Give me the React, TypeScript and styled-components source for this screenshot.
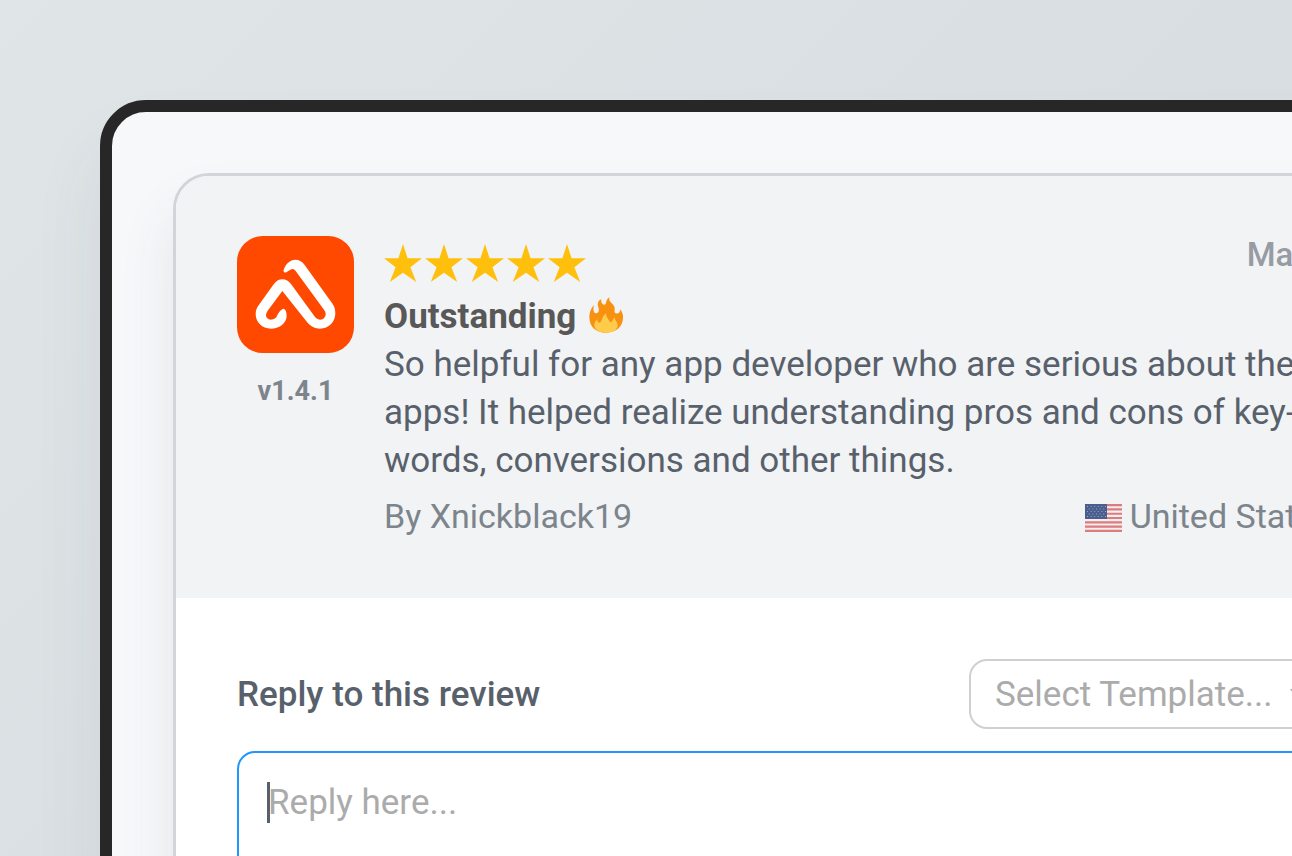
import React from "react";
import styled, { createGlobalStyle } from "styled-components";

const GlobalStyle = createGlobalStyle`
  *, *::before, *::after { box-sizing: border-box; }
  html, body { margin: 0; overflow: hidden; }
  body {
    font-family: Roboto, "Liberation Sans", sans-serif;
    color: #58616b;
    -webkit-font-smoothing: antialiased;
  }
  h2, p { margin: 0; }
`;

const Page = styled.main`
  display: flex;
  height: 100vh;
  padding: 100px 0 0 100px;
  overflow: hidden;
  background: linear-gradient(135deg, #e0e5e8 0%, #d9dee2 60%, #d5dade 100%);
`;

const Frame = styled.div`
  flex: 1;
  margin: 0 -177px -160px 0;
  padding: 61px;
  border: 12px solid #272727;
  border-radius: 46px;
  background: #f7f8fa;
  box-shadow: 0 48px 72px rgba(60, 80, 90, 0.08);
`;

const Card = styled.article`
  border: 3px solid #d2d4da;
  border-radius: 36px;
  overflow: hidden;
  background: #ffffff;
  box-shadow: 0 36px 56px rgba(60, 66, 80, 0.1);
`;

const Review = styled.section`
  display: flex;
  gap: 30px;
  padding: 60px 61px 58px;
  background: #f2f3f5;
`;

const AppInfo = styled.div`
  display: flex;
  flex-direction: column;
  align-items: center;
  gap: 22px;
  width: 117px;
  flex: none;
`;

const AppIcon = styled.svg`
  width: 117px;
  height: 117px;
`;

const Version = styled.span`
  font-size: 27px;
  line-height: 32px;
  font-weight: 700;
  color: #7c848c;
`;

const Body = styled.div`
  flex: 1;
  min-width: 0;
`;

const Row = styled.div`
  display: flex;
  justify-content: space-between;
  align-items: center;
`;

const RatingRow = styled(Row)`
  align-items: flex-start;
  height: 57px;
`;

const Stars = styled.div`
  display: flex;
  gap: 3px;
  padding-top: 8px;
`;

const Star = styled.svg`
  width: 38px;
  height: 38px;
  fill: #ffc00d;
`;

const DateText = styled.time`
  font-size: 33px;
  line-height: 38px;
  font-weight: 500;
  color: #979ba3;
  white-space: nowrap;
`;

const Title = styled.h2`
  display: flex;
  align-items: center;
  gap: 12px;
  font-size: 35px;
  line-height: 48px;
  font-weight: 700;
  color: #585858;
`;

const Flame = styled.svg`
  width: 36px;
  height: 36px;
  margin-bottom: 4px;
`;

const Text = styled.p`
  font-size: 35px;
  line-height: 48px;
  white-space: nowrap;
`;

const MetaRow = styled(Row)`
  padding-top: 7px;
  font-size: 34px;
  line-height: 48px;
  color: #7c848c;
  white-space: nowrap;
`;

const Country = styled.span`
  display: flex;
  align-items: center;
  gap: 8px;
`;

const Flag = styled.svg`
  width: 37px;
  height: 28px;
  margin-top: 4px;
`;

const Reply = styled.section`
  padding: 61px;
`;

const ReplyLabel = styled.label`
  padding-top: 2px;
  font-size: 35px;
  line-height: 48px;
  font-weight: 500;
`;

const SelectBox = styled.div`
  position: relative;
  width: 363px;
`;

const Select = styled.select`
  appearance: none;
  display: block;
  width: 100%;
  height: 70px;
  padding: 0 24px;
  border: 2px solid #d0d0d2;
  border-radius: 18px;
  background: #ffffff;
  color: #ababab;
  font: 400 35px Roboto, "Liberation Sans", sans-serif;
`;

const Chevron = styled.svg`
  position: absolute;
  top: 30px;
  right: 24px;
  width: 18px;
  height: 12px;
  fill: #ababab;
`;

const EditorBox = styled.div`
  position: relative;
  margin-top: 22px;
`;

const Editor = styled.textarea`
  display: block;
  width: 100%;
  height: 240px;
  padding: 26px 29px;
  border: 2px solid #2196ff;
  border-radius: 18px;
  outline: none;
  resize: none;
  background: #ffffff;
  color: #58616b;
  font: 400 35px/48px Roboto, "Liberation Sans", sans-serif;
  &::placeholder { color: #ababab; opacity: 1; }
`;

const Caret = styled.span`
  position: absolute;
  top: 31px;
  left: 30px;
  width: 3px;
  height: 41px;
  background: #58616b;
`;

export default function App() {
  return (
    <>
      <GlobalStyle />
      <Page>
        <Frame>
          <Card>
            <Review>
              <AppInfo>
                <AppIcon viewBox="51 46 351 351" aria-hidden="true">
                  <rect x="51" y="46" width="351" height="351" rx="77" fill="#ff4800" />
                  <path
                    fill="#fff"
                    d="M191 264Q199 266 200 285C200 308 176 324 153 324C126 324 107 304 107 280C107 268 111 260 118 251L160 192C168 181 177 176 187 176C198 176 206 181 213 190L285 289C290 295 296 297 301 297C310 297 317 289 317 280C317 275 315 271 312 267L227 151C223 145 217 143 211 147L199 155C194 157 189 153 191 147C197 130 210 117 226 117C238 117 247 123 254 133L338 250C344 259 346 268 346 278C346 304 326 324 300 324C285 324 272 317 264 308L187 211L143 270C139 276 138 281 138 284C138 291 144 297 152 297C163 297 168 292 171 286C175 276 182 266 191 264Z"
                  />
                </AppIcon>
                <Version>v1.4.1</Version>
              </AppInfo>
              <Body>
                <RatingRow>
                  <Stars role="img" aria-label="5 stars">
                    {[0, 1, 2, 3, 4].map((i) => (
                      <Star key={i} viewBox="0 0 38 38">
                        <path d="M19 0L23.6 14.2H38L26.4 23.2L32.2 38L19 28.8L5.8 38L11.6 23.2L0 14.2H14.4Z" />
                      </Star>
                    ))}
                  </Stars>
                  <DateText>Mar 8</DateText>
                </RatingRow>
                <Title>
                  Outstanding
                  <Flame viewBox="656 202 106 108" aria-hidden="true">
                    <path
                      fill="#f7910f"
                      d="M709 309C678 309 659 291 659 262C659 248 664 236 673 226C670 238 671 251 679 251C688 251 689 241 686 233C682 221 686 212 695 209C693 217 698 226 705 225C712 223 707 210 719 203C716 217 728 220 733 229C738 237 731 247 738 251C746 253 752 249 751 239C758 246 761 256 760 266C758 292 740 309 709 309Z"
                    />
                    <path
                      fill="#ffcb4b"
                      d="M709 309C687 309 672 298 674 284C675 276 680 272 683 269C683 279 688 281 693 277C698 270 697 259 710 251C708 261 715 266 718 272C720 277 722 280 726 276C730 272 731 265 735 261C733 270 745 276 744 289C742 302 728 309 709 309Z"
                    />
                  </Flame>
                </Title>
                <Text>
                  So helpful for any app developer who are serious about their
                  <br />
                  apps! It helped realize understanding pros and cons of key-
                  <br />
                  words, conversions and other things.
                </Text>
                <MetaRow>
                  <span>By Xnickblack19</span>
                  <Country>
                    <Flag viewBox="0 0 37 28" aria-hidden="true">
                      <rect width="37" height="28" fill="#f4eeee" />
                      <path
                        stroke="#dc7b80"
                        strokeWidth="2.15"
                        d="M0 1.1H37M0 5.4H37M0 9.7H37M0 14H37M0 18.3H37M0 22.6H37M0 26.9H37"
                      />
                      <rect width="22" height="15" fill="#4a5f8e" />
                      <path
                        stroke="#9aa8c4"
                        strokeWidth="1"
                        strokeDasharray="1 2.6"
                        d="M2 2.5H21M3.8 5H21M2 7.5H21M3.8 10H21M2 12.5H21"
                      />
                    </Flag>
                    United States
                  </Country>
                </MetaRow>
              </Body>
            </Review>
            <Reply>
              <Row>
                <ReplyLabel htmlFor="reply">Reply to this review</ReplyLabel>
                <SelectBox>
                  <Select aria-label="Template" defaultValue="">
                    <option value="">Select Template...</option>
                  </Select>
                  <Chevron viewBox="0 0 18 12" aria-hidden="true">
                    <path d="M0 0H18L9 12Z" />
                  </Chevron>
                </SelectBox>
              </Row>
              <EditorBox>
                <Editor id="reply" placeholder="Reply here..." />
                <Caret />
              </EditorBox>
            </Reply>
          </Card>
        </Frame>
      </Page>
    </>
  );
}
